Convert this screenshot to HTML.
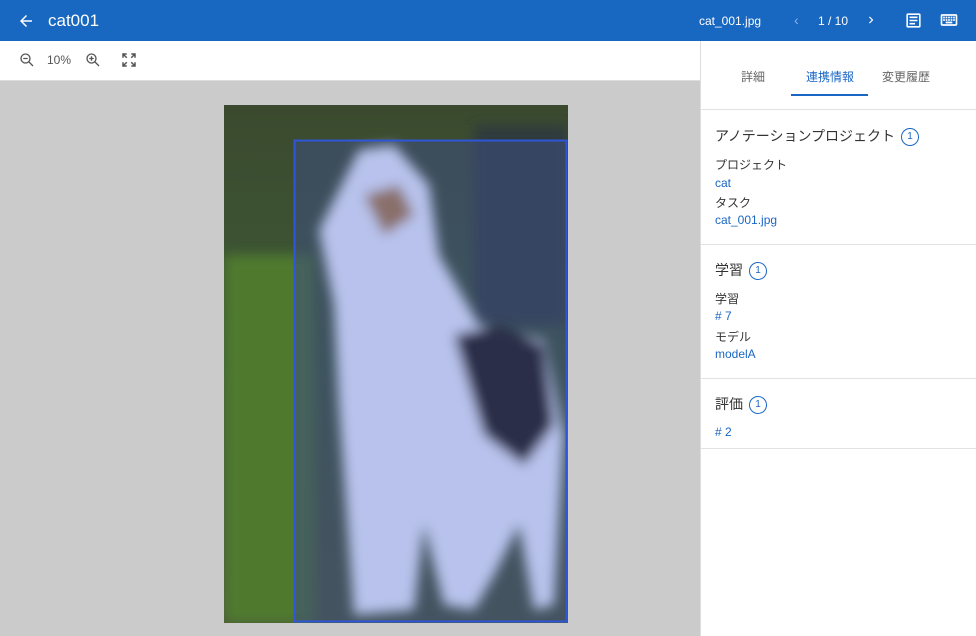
<!DOCTYPE html>
<html><head><meta charset="utf-8"><style>
*{margin:0;padding:0;box-sizing:border-box}
body{width:976px;height:636px;overflow:hidden;font-family:"Liberation Sans","Noto Sans CJK JP",sans-serif;background:#fff;position:relative}
.hdr{position:absolute;left:0;top:0;width:976px;height:41px;background:#1867c0;color:#fff}
.tb{position:absolute;left:0;top:41px;width:700px;height:40px;background:#fff;border-bottom:1px solid #ddd}
.view{position:absolute;left:0;top:81px;width:700px;height:555px;background:#cbcbcb}
.side{position:absolute;left:700px;top:41px;width:276px;height:595px;background:#fff;border-left:1px solid #ddd}
.t{position:absolute;font-size:12px}
.hr{position:absolute;left:0;width:276px;height:1px;background:#e2e2e2}
.badge{display:inline-block;width:18px;height:18px;border:1.5px solid #1a66c4;border-radius:50%;color:#1a66c4;font-size:10px;text-align:center;line-height:15px;vertical-align:middle;margin-left:6px}
.h{position:absolute;left:14px;font-size:14px;color:#333}
.s{position:absolute;left:14px;font-size:12px;color:#333}
.s.blue,.t.blue{color:#1a66c4}
</style></head><body>
<div class="hdr">
<svg style="position:absolute;left:17px;top:12px" width="18" height="18" viewBox="0 0 24 24"><path d="M20 11H7.8l5.6-5.6L12 4l-8 8 8 8 1.4-1.4L7.8 13H20z" fill="#fff"/></svg>
<div style="position:absolute;left:48px;top:11px;font-size:17px">cat001</div>
<div style="position:absolute;left:699px;top:14px;font-size:12px">cat_001.jpg</div>
<div style="position:absolute;left:794px;top:12px;font-size:14px;color:#8fb3e3">‹</div>
<div style="position:absolute;left:818px;top:14px;font-size:12px">1 / 10</div>
<svg style="position:absolute;left:864px;top:13px" width="14" height="14" viewBox="0 0 24 24"><path d="M8.6 16.6 13.2 12 8.6 7.4 10 6l6 6-6 6z" fill="#fff"/></svg>
<svg style="position:absolute;left:904px;top:11px" width="19" height="19" viewBox="0 0 24 24"><path d="M19 3H5a2 2 0 0 0-2 2v14a2 2 0 0 0 2 2h14a2 2 0 0 0 2-2V5a2 2 0 0 0-2-2zm0 16H5V5h14zM7 7h10v2H7zm0 4h10v2H7zm0 4h7v2H7z" fill="#fff"/></svg>
<svg style="position:absolute;left:939px;top:10px" width="20" height="20" viewBox="0 0 24 24"><path d="M20 5H4a2 2 0 0 0-2 2v10a2 2 0 0 0 2 2h16a2 2 0 0 0 2-2V7a2 2 0 0 0-2-2zm0 12H4V7h16zM5 8h2v2H5zm3 0h2v2H8zm3 0h2v2h-2zm3 0h2v2h-2zm3 0h2v2h-2zM5 11h2v2H5zm3 0h2v2H8zm3 0h2v2h-2zm3 0h2v2h-2zm3 0h2v2h-2zM8 14h8v2H8z" fill="#fff"/></svg>
</div>
<div class="tb">
<svg style="position:absolute;left:18px;top:10px" width="18" height="18" viewBox="0 0 24 24" fill="none" stroke="#555" stroke-width="1.8"><circle cx="10" cy="10" r="6"/><path d="M14.5 14.5 20 20M7 10h6"/></svg>
<div class="t" style="left:47px;top:12px;color:#555">10%</div>
<svg style="position:absolute;left:84px;top:10px" width="18" height="18" viewBox="0 0 24 24" fill="none" stroke="#555" stroke-width="1.8"><circle cx="10" cy="10" r="6"/><path d="M14.5 14.5 20 20M7 10h6M10 7v6"/></svg>
<svg style="position:absolute;left:120px;top:10px" width="18" height="18" viewBox="0 0 24 24" fill="none" stroke="#555" stroke-width="2"><path d="M4 9V4h5M4 4l5 5M20 9V4h-5M20 4l-5 5M4 15v5h5M4 20l5-5M20 15v5h-5M20 20l-5-5"/></svg>
</div>
<div class="view">
<svg style="position:absolute;left:224px;top:24px" width="344" height="518" viewBox="0 0 344 518">
<defs><linearGradient id="bg" x1="0" y1="0" x2="0" y2="1"><stop offset="0" stop-color="#3b4a2e"/><stop offset=".5" stop-color="#3d5a38"/><stop offset="1" stop-color="#4d5a3a"/></linearGradient>
<filter id="b"><feGaussianBlur stdDeviation="6"/></filter></defs>
<rect width="344" height="518" fill="url(#bg)"/>
<rect x="0" y="150" width="90" height="368" fill="#4f7a2f" filter="url(#b)"/>
<rect x="250" y="20" width="94" height="200" fill="#2d3a3c" filter="url(#b)"/>
<rect x="70" y="35" width="273" height="481" fill="#3e4e80" opacity=".55"/>
<g filter="url(#b)">
<path d="M95 125 L135 45 L170 40 L205 80 L215 150 L255 220 L320 235 L340 330 L330 500 L310 505 L295 420 L270 470 L250 505 L220 500 L200 420 L190 505 L130 510 L115 300 L110 200 Z" fill="#b8c2ec"/>
<path d="M230 230 L275 220 L320 240 L330 320 L300 360 L260 330 Z" fill="#2a2d4a"/>
<path d="M140 90 L175 80 L190 110 L160 130 Z" fill="#8a6f6a"/>
</g>
<rect x="70.5" y="35.5" width="272" height="481" fill="none" stroke="#2f56d8" stroke-width="2"/>
</svg>
</div>
<div class="side">
<div class="t" style="left:40px;top:27px;color:#666">詳細</div>
<div class="t blue" style="left:105px;top:27px">連携情報</div>
<div class="t" style="left:181px;top:27px;color:#666">変更履歴</div>
<div style="position:absolute;left:90px;top:53px;width:77px;height:2px;background:#1a66c4"></div>
<div class="hr" style="top:68px"></div>
<div class="h" style="top:85px">アノテーションプロジェクト<span class="badge">1</span></div>
<div class="s" style="top:115px">プロジェクト</div>
<div class="s blue" style="top:135px">cat</div>
<div class="s" style="top:153px">タスク</div>
<div class="s blue" style="top:172px">cat_001.jpg</div>
<div class="hr" style="top:203px"></div>
<div class="h" style="top:219px">学習<span class="badge">1</span></div>
<div class="s" style="top:249px">学習</div>
<div class="s blue" style="top:268px"># 7</div>
<div class="s" style="top:287px">モデル</div>
<div class="s blue" style="top:306px">modelA</div>
<div class="hr" style="top:337px"></div>
<div class="h" style="top:353px">評価<span class="badge">1</span></div>
<div class="s blue" style="top:384px"># 2</div>
<div class="hr" style="top:407px"></div>
</div>
</body></html>
